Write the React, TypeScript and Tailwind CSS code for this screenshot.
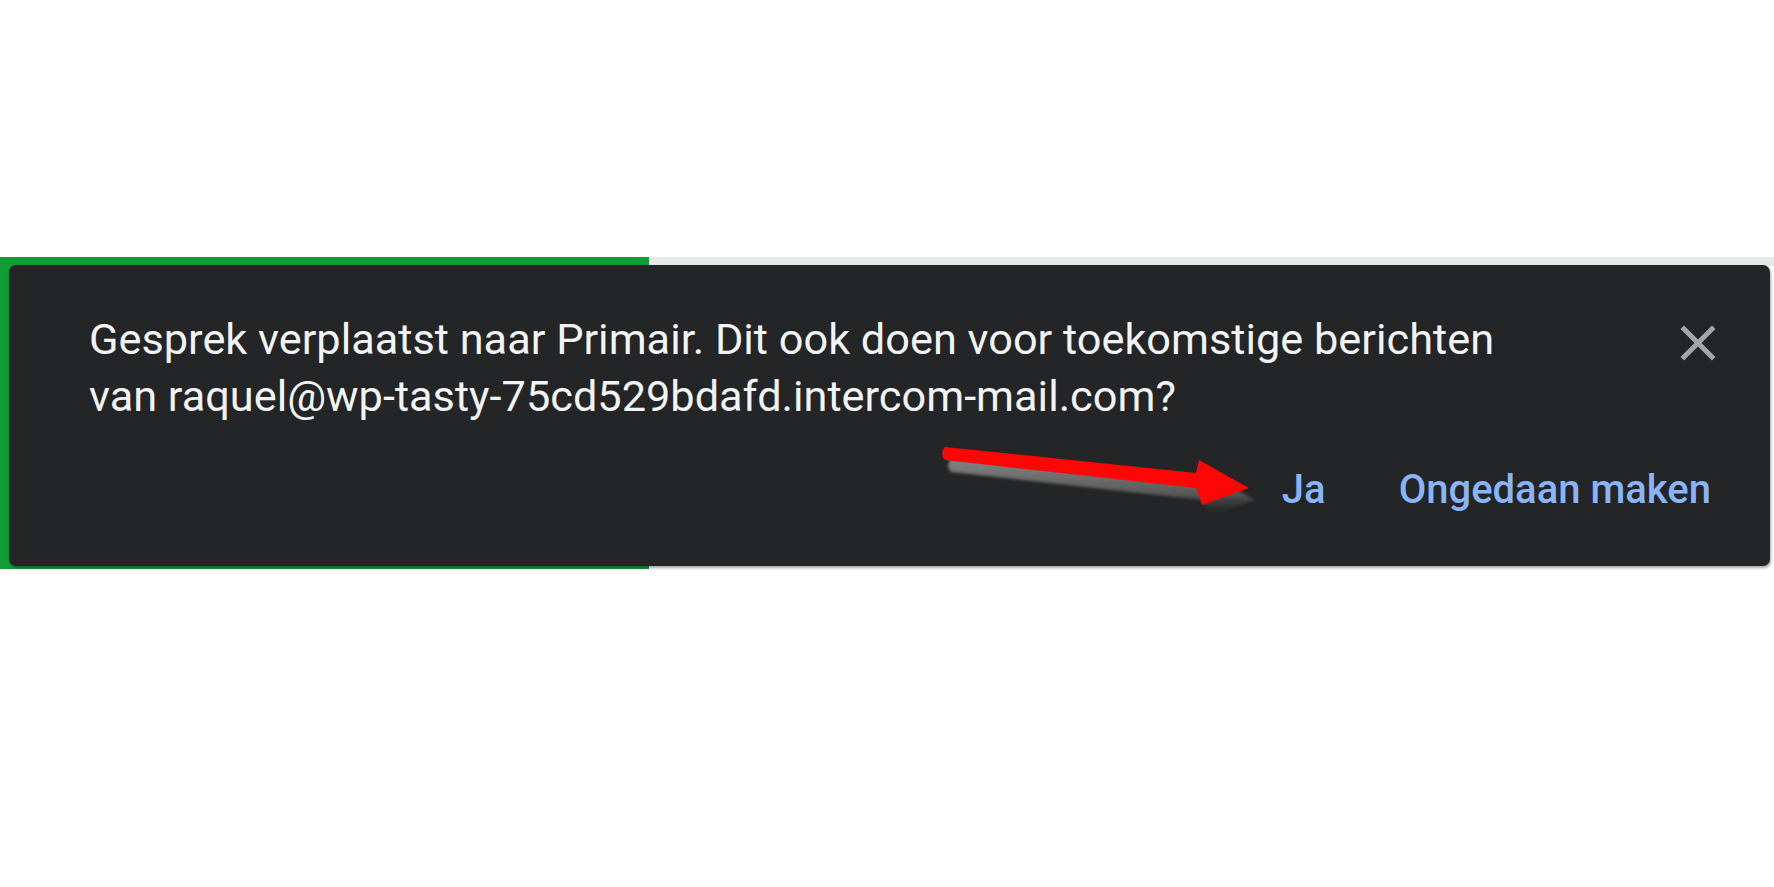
import React from "react";

function CloseIcon() {
  return (
    <svg width="60" height="60" viewBox="0 0 24 24" aria-hidden="true">
      <path
        fill="#a3a7ab"
        d="M19 6.41L17.59 5 12 10.59 6.41 5 5 6.41 10.59 12 5 17.59 6.41 19 12 13.41 17.59 19 19 17.59 13.41 12z"
      />
    </svg>
  );
}

// Hand-drawn pointer marking the "Ja" action
function PointerArrow() {
  const shape =
    "M15 17 L266 43 L269 30 L319 58 L272 75 L266 58 L15 30 Q9 23.5 15 17 Z";
  return (
    <svg
      width="340"
      height="95"
      viewBox="0 0 340 95"
      className="absolute left-[921px] top-[165px]"
      aria-hidden="true"
    >
      <defs>
        <linearGradient id="arrowShade" x1="0" y1="0" x2="0" y2="1">
          <stop offset="0" stopColor="#909090" />
          <stop offset="0.6" stopColor="#5e5e5e" />
          <stop offset="1" stopColor="#2a2b2c" stopOpacity="0" />
        </linearGradient>
        <filter id="arrowBlur" x="-10%" y="-30%" width="120%" height="160%">
          <feGaussianBlur stdDeviation="1.4" />
        </filter>
      </defs>
      <path
        d={shape}
        transform="translate(6 12)"
        fill="url(#arrowShade)"
        filter="url(#arrowBlur)"
        opacity="0.9"
      />
      <path d={shape} fill="#ff0606" />
    </svg>
  );
}

export default function App() {
  return (
    <div className="w-[1774px] h-[887px] bg-white overflow-hidden font-['Roboto','Liberation_Sans',sans-serif]">
      <div className="pt-[257px] grid">
        {/* underlying page: green selection edge and grey header strip */}
        <div className="col-start-1 row-start-1 flex items-start">
          <div className="w-[649px] h-[312px] bg-[#119c37]" />
          <div className="flex-1 h-[9px] bg-[#e4eae6]" />
        </div>

        {/* snackbar */}
        <div className="col-start-1 row-start-1 relative ml-[9px] mt-[8px] w-[1761px] h-[301px] rounded-[7px] bg-[#242526] shadow-[1px_2px_3px_rgba(0,0,0,0.35)] pl-[80px] pr-[42px] pt-[46px] flex flex-col">
          <div className="flex items-start justify-between">
            <p className="text-[43.3px] leading-[57px] text-[#f1f3f4]">
              Gesprek verplaatst naar Primair. Dit ook doen voor toekomstige berichten
              <br />
              van raquel@wp-tasty-75cd529bdafd.intercom-mail.com?
            </p>
            <button className="w-[60px] h-[60px] flex items-center justify-center mt-[2px]">
              <CloseIcon />
            </button>
          </div>
          <div className="mt-[36px] flex justify-end items-center gap-[73px] pr-[17px]">
            <button className="text-[40px] leading-[57px] font-medium text-[#8ab4f8]">Ja</button>
            <button className="text-[40px] leading-[57px] font-medium text-[#8ab4f8]">
              Ongedaan maken
            </button>
          </div>
          <PointerArrow />
        </div>
      </div>
    </div>
  );
}
